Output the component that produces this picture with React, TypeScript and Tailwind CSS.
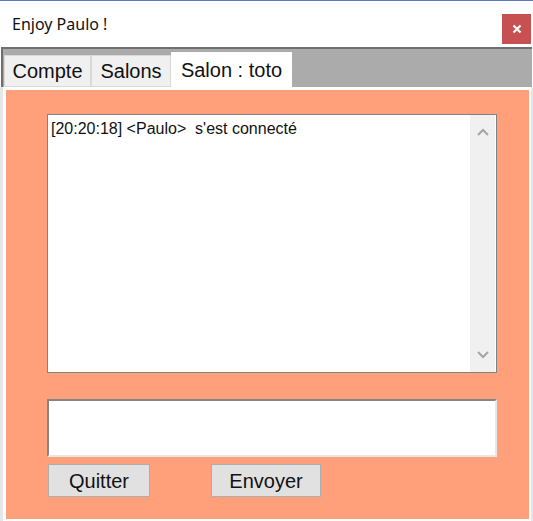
export default function App() {
  const arial = { fontFamily: '"Liberation Sans", Arial, sans-serif' };

  return (
    <div className="flex h-[521px] w-[533px] flex-col overflow-hidden bg-white" style={arial}>
      {/* bordure haute */}
      <div className="h-px bg-[#5b7cc4]" />

      {/* barre de titre */}
      <div className="flex h-[46px] items-start justify-between">
        <span
          className="pl-[12px] pt-[13px] text-[16px] leading-[20px] text-[#111]"
          style={{ fontFamily: '"Noto Sans", "Open Sans", sans-serif' }}
        >
          Enjoy Paulo !
        </span>
        <button className="mr-[2px] mt-[13px] flex h-[30px] w-[29px] items-center justify-center bg-[#c75050]">
          <svg width="10" height="10" viewBox="0 0 10 10">
            <path d="M1.5 1.5 L8.5 8.5 M8.5 1.5 L1.5 8.5" stroke="white" strokeWidth="2.2" />
          </svg>
        </button>
      </div>

      {/* onglets */}
      <div className="mx-[1px] flex h-[40px] items-end border-l-[2px] border-t-[2px] border-[#6f6f6f] bg-[#ababab] pl-[1px]">
        <div className="flex h-[32px] w-[87px] items-center justify-center border border-[#d9d9d9] bg-[#f0f0f0] text-[20px] text-[#111]">
          Compte
        </div>
        <div className="flex h-[32px] w-[80px] items-center justify-center border border-[#d9d9d9] bg-[#f0f0f0] text-[20px] text-[#111]">
          Salons
        </div>
        <div className="flex h-[35px] w-[121px] items-start justify-center bg-white pt-[3px] text-[20px] text-[#111]">
          Salon : toto
        </div>
      </div>

      {/* page */}
      <div className="flex flex-1 border-l-[3px] border-r-[2px] border-[#e6e6e6] bg-white pb-[2px] pl-[3px] pr-[2px] pt-[3px]">
        <div className="flex flex-1 flex-col bg-[#ffa07a] pl-[41px] pt-[24px]">
          {/* historique */}
          <div className="flex h-[259px] w-[450px] border border-[#828282] bg-white">
            <div className="flex-1 whitespace-pre pl-[3px] pt-[5px] text-[16px] leading-[18px] text-[#111]">
              {"[20:20:18] <Paulo>  s'est connecté"}
            </div>
            <div className="mr-px flex w-[25px] flex-col items-center justify-between bg-[#f0f0f0] py-[13px]">
              <svg width="12" height="8" viewBox="0 0 12 8">
                <path d="M1 7 L6 2 L11 7" fill="none" stroke="#a6a6a6" strokeWidth="2" />
              </svg>
              <svg width="12" height="8" viewBox="0 0 12 8">
                <path d="M1 1 L6 6 L11 1" fill="none" stroke="#a6a6a6" strokeWidth="2" />
              </svg>
            </div>
          </div>

          {/* saisie */}
          <div className="mt-[26px] h-[58px] w-[450px] border-b-[2px] border-l-[2px] border-r-[2px] border-t-[2px] border-b-[#e8e8e8] border-l-[#858585] border-r-[#e8e8e8] border-t-[#858585] bg-white" />

          {/* boutons */}
          <div className="mt-[7px] flex pl-[1px]">
            <button className="h-[33px] w-[102px] border border-[#adadad] bg-[#e1e1e1] text-[20px] text-[#111]">
              Quitter
            </button>
            <button className="ml-[61px] h-[33px] w-[110px] border border-[#adadad] bg-[#e1e1e1] text-[20px] text-[#111]">
              Envoyer
            </button>
          </div>
        </div>
      </div>
    </div>
  );
}
